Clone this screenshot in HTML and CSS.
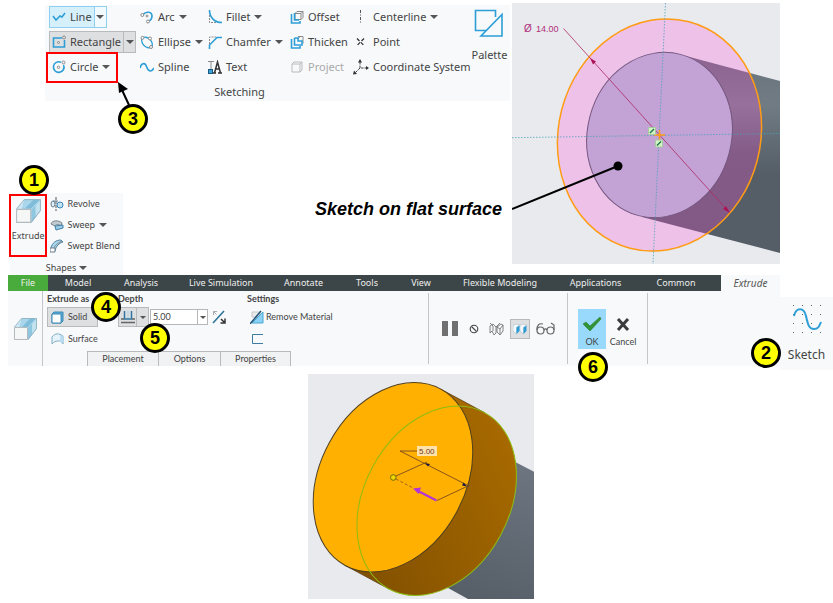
FILE: index.html
```html
<!DOCTYPE html>
<html lang="en">
<head>
<meta charset="utf-8">
<title>Extrude a sketch</title>
<link rel="stylesheet" href="styles.css">
</head>
<body>
<main>
<section class="top">
  <div class="left">
    <div class="sketching">
      <div class="tools">
        <div class="tool-col">
          <div class="tool split line">
            <button class="cmd"><svg class="ico" viewBox="0 0 14 14"><path d="M1 6l3 4 4-4 2 1 3-4" class="blue s2"/></svg>Line</button>
            <button class="drop" aria-label="Line options"><i class="caret"></i></button>
          </div>
          <div class="tool split rectangle">
            <button class="cmd"><svg class="ico" viewBox="0 0 14 14"><path d="M10 3H1.500v9h11V5" class="blue s2"/><circle cx="6.500" cy="7.500" r="1" class="gray"/><circle cx="12" cy="2.500" r="1.500" class="gray"/></svg>Rectangle</button>
            <button class="drop" aria-label="Rectangle options"><i class="caret"></i></button>
          </div>
          <div class="tool circle">
            <button class="cmd"><svg class="ico" viewBox="0 0 14 14"><path d="M9 2.300A5.300 5.300 0 1 0 11.600 5" class="blue s2"/><circle cx="6.500" cy="7.300" r="1.200" class="gray"/><circle cx="11.500" cy="2.500" r="1.500" class="gray"/></svg>Circle</button>
            <button class="drop" aria-label="Circle options"><i class="caret"></i></button>
            <span class="mark"></span>
            <svg class="pointer" viewBox="0 0 14 24"><path d="M12 23L5 8" stroke="#000" stroke-width="2"/><path d="M1 0l10 7-9 4z" fill="#000"/></svg>
            <span class="badge b3">3</span>
          </div>
        </div>
        <div class="tool-col">
          <div class="tool"><button class="cmd"><svg class="ico" viewBox="0 0 14 14"><path d="M3 4.500C6 1 12 1.500 12 6c0 2-1 4-3 5" class="blue s2"/><circle cx="2.300" cy="5" r="1.500" class="gray w"/><circle cx="8" cy="11.500" r="1.500" class="gray w"/><circle cx="7" cy="6" r="1" class="gray"/></svg>Arc</button><button class="drop" aria-label="Arc options"><i class="caret"></i></button></div>
          <div class="tool"><button class="cmd"><svg class="ico" viewBox="0 0 14 14"><ellipse cx="7" cy="7.500" rx="6.300" ry="4.200" transform="rotate(45 7 7.500)" class="blue s1"/><circle cx="2.500" cy="2.800" r="1.500" class="gray w"/><circle cx="11" cy="12" r="1.500" class="gray w"/><circle cx="10" cy="3.500" r="1.500" class="gray w"/></svg>Ellipse</button><button class="drop" aria-label="Ellipse options"><i class="caret"></i></button></div>
          <div class="tool"><button class="cmd"><svg class="ico" viewBox="0 0 14 14"><path d="M0 8C1 3 5 2 6.500 6.500S11 13 14 8" class="blue s2"/></svg>Spline</button></div>
        </div>
        <div class="tool-col">
          <div class="tool"><button class="cmd"><svg class="ico" viewBox="0 0 14 14"><path d="M1.500 0C1.500 7 6 12.500 14 12.500" class="blue s2"/><path d="M1.500 5v7.500H8" class="gray dash"/></svg>Fillet</button><button class="drop" aria-label="Fillet options"><i class="caret"></i></button></div>
          <div class="tool"><button class="cmd"><svg class="ico" viewBox="0 0 14 14"><path d="M1.500 14V10L9 2.500H14" class="blue s2"/><path d="M1.500 9V2H8" class="gray dash"/></svg>Chamfer</button><button class="drop" aria-label="Chamfer options"><i class="caret"></i></button></div>
          <div class="tool"><button class="cmd"><svg class="ico" viewBox="0 0 14 14"><path d="M5 13h3M10 13h4M6.500 13L9.500 2l3 11M7.500 9h4" fill="none" stroke="#333" stroke-width="1.500"/><path d="M0 1.500h6M3 1.500v8" class="gray"/><rect x="0.500" y="9.500" width="4" height="4" fill="#3fa0d5" stroke="#155c85"/></svg>Text</button></div>
        </div>
        <div class="tool-col">
          <div class="tool"><button class="cmd"><svg class="ico" viewBox="0 0 14 14"><path d="M5 3.500L7 1.500h6v6l-2 2H5zM5 3.500h6v6M11 3.500l2-2" class="gray"/><path d="M1.500 4v9H10V11M4.500 3v7H9" class="blue s2"/></svg>Offset</button></div>
          <div class="tool"><button class="cmd"><svg class="ico" viewBox="0 0 14 14"><path d="M8 1.500h5v7M8 4l2-2.500" class="gray"/><path d="M1.500 4v9H10V11M4.500 3v7H12V6H8V3H4.500" class="blue s2"/></svg>Thicken</button></div>
          <div class="tool off"><button class="cmd" disabled><svg class="ico" viewBox="0 0 14 14"><path d="M2 4l2-2h8v8l-2 2H2zM2 4h8v8M10 4l2-2" fill="none" stroke="#bbb"/></svg>Project</button></div>
        </div>
        <div class="tool-col">
          <div class="tool"><button class="cmd"><svg class="ico" viewBox="0 0 14 14"><path d="M5.500 0v14" stroke="#555" stroke-dasharray="3 1.500 1 1.500"/></svg>Centerline</button><button class="drop" aria-label="Centerline options"><i class="caret"></i></button></div>
          <div class="tool"><button class="cmd"><svg class="ico" viewBox="0 0 14 14"><path d="M2 3.500l7 7M9 3.500l-7 7" stroke="#333" stroke-width="1.300" stroke-dasharray="3.500 2"/></svg>Point</button></div>
          <div class="tool"><button class="cmd"><svg class="ico wide" viewBox="0 0 16 16"><path d="M7 3v6h6M7 9l-5 5" fill="none" stroke="#444" stroke-dasharray="2.500 1"/><path d="M7 0l2 3.500H5zM16 9l-3 2V7zM0 15.500l1-4 3 3.500z" fill="#333"/></svg>Coordinate System</button></div>
        </div>
        <button class="palette"><svg viewBox="0 0 30 30"><path d="M12 21.500H1.500v-20h20V8" class="blue s2"/><path d="M28 5.500v21.500H7z" class="blue s2"/></svg>Palette</button>
      </div>
      <div class="group-name">Sketching</div>
    </div>
    <div class="lower">
      <div class="shapes">
        <div class="shapes-body">
          <button class="extrude"><svg viewBox="0 0 24 24"><use href="#box"/></svg>Extrude
            <span class="badge b1">1</span></button>
          <div class="shape-list">
            <div class="tool"><button class="cmd"><svg class="ico" viewBox="0 0 14 14"><path d="M6 0v14" stroke="#555" stroke-dasharray="3 1"/><ellipse cx="3" cy="7" rx="2" ry="3" fill="#dceefa" stroke="#6d7f8c"/><circle cx="10" cy="8" r="3" fill="#bfe2f5" stroke="#3b87b8"/><path d="M3 4h5" stroke="#6d7f8c"/></svg>Revolve</button></div>
            <div class="tool"><button class="cmd"><svg class="ico" viewBox="0 0 14 14"><path d="M1 6c1-4 8-4 11-1l-1 3C8 6 6 6 5 8z" fill="#c3cbd1" stroke="#77848d"/><path d="M5 8l8-1v3l-7 2z" fill="#9ccde8" stroke="#3f7fa8"/></svg>Sweep</button><button class="drop" aria-label="Sweep options"><i class="caret"></i></button></div>
            <div class="tool"><button class="cmd"><svg class="ico" viewBox="0 0 14 14"><path d="M1 9C2 4 6 1 11 1l2 2C9 4 6 7 5 12z" fill="#a8d8f0" stroke="#4d7f9c"/><path d="M0 9h5v4H0z" fill="#fff" stroke="#6d7f8c"/><path d="M4 9c1-3 4-5 8-7" class="gray"/></svg>Swept Blend</button></div>
          </div>
        </div>
        <button class="shapes-name">Shapes<i class="caret"></i></button>
      </div>
      <p class="caption">Sketch on flat surface</p>
    </div>
  </div>
  <svg class="view" viewBox="512 3 268 261" role="img" aria-label="Sketched circle on the end of a shaft">
    <defs>
      <linearGradient id="shaft" x1="0" y1="0" x2="0" y2="1"><stop offset="0" stop-color="#69757d"/><stop offset=".25" stop-color="#707b84"/><stop offset=".6" stop-color="#555e67"/><stop offset="1" stop-color="#555d66"/></linearGradient>
      <linearGradient id="tint" x1="0" y1="0" x2="0" y2="1"><stop offset="0" stop-color="#8d6490"/><stop offset=".25" stop-color="#97709c"/><stop offset=".5" stop-color="#845b87"/><stop offset="1" stop-color="#825985"/></linearGradient>
      <clipPath id="ring"><ellipse cx="659.500" cy="135" rx="101" ry="117" transform="rotate(14.600 659.500 135)"/></clipPath>
    </defs>
    <rect x="512" y="3" width="268" height="261" fill="#e8eaee"/>
    <path d="M686 56L780 81V253L642 217z" fill="url(#shaft)"/>
    <g clip-path="url(#ring)">
      <rect x="540" y="10" width="240" height="250" fill="#eec1e9"/>
      <path d="M686 56L780 81V253L642 217z" fill="url(#tint)"/>
    </g>
    <ellipse cx="659.500" cy="135" rx="72" ry="83.300" transform="rotate(14.600 659.500 135)" fill="#c3a2d6" stroke="#75587f"/>
    <ellipse cx="659.500" cy="135" rx="101" ry="117" transform="rotate(14.600 659.500 135)" fill="none" stroke="#ff9c14" stroke-width="1.500"/>
    <path d="M665.500 3L653 264M512 137.700L780 133.500" stroke="#4fa0b8" stroke-width=".8" stroke-dasharray="1.500 1.500"/>
    <path d="M563.500 28.500L729 212" stroke="#ad2861" stroke-width=".8"/>
    <path d="M590 58l6 3.500-3 3zM730 213l-7-4 3-3z" fill="#ad1457"/>
    <path d="M654 135h11M659.500 130v11" stroke="#ff9c14" stroke-width="1.500"/>
    <path d="M648.500 127.500h7v7h-7zM655.500 140h7v7h-7z" fill="#d2f5c6" stroke="#a9c8a0"/>
    <path d="M650 133l4-4M657 145.500l4-4" stroke="#27764b" stroke-width="1.500"/>
    <text x="524" y="32" font-size="10" class="dim14">Ø</text><text x="536" y="32" font-size="9" class="dim14">14.00</text>
    <path d="M512 209L618 166" stroke="#000" stroke-width="2"/><circle cx="618" cy="166" r="4.500"/>
  </svg>
</section>

<section class="middle">
  <div class="ribbon">
    <nav class="tabs">
      <button class="file">File</button><button>Model</button><button>Analysis</button><button>Live Simulation</button><button>Annotate</button><button>Tools</button><button>View</button><button>Flexible Modeling</button><button>Applications</button><button>Common</button><span></span><button class="current">Extrude</button>
    </nav>
    <div class="panel">
      <div class="feature"><svg viewBox="0 0 24 24"><g id="box"><path d="M1 10L8.500 1H23.500V12L15 23H1z" fill="#cde8f4"/><path d="M9 1.500h14L15 10H6.500z" fill="#7fbddb"/><path d="M9 1.500h8L9 10H6.500z" fill="#a9d6ea"/><path d="M23.500 1.500L15 10.500V23l8.500-11z" fill="#8fc6e0"/><path d="M19 7l4.500-5v10L19 17z" fill="#c2e2f0"/><path d="M1.500 10L8.500 1.500h15v10L15 22.500" fill="none" stroke="#8aa7b5" stroke-width=".7"/><path d="M1.500 10.500h13v12h-13z" fill="#f5f6f6" stroke="#b4bbbf"/></g></svg></div>
      <div class="options">
        <div class="groups">
          <div class="group">
            <h2>Extrude as</h2>
            <button class="opt solid"><svg class="ico" viewBox="0 0 14 14"><path d="M2 4l2-2h9v9l-2 2H2z" fill="#58aedb" stroke="#3c89b5"/><path d="M2 4h9v9H2z" fill="#fff" stroke="#3c89b5"/></svg>Solid</button>
            <button class="opt"><svg class="ico" viewBox="0 0 14 14"><path d="M2 12V5c3-4 7-4 11-1v8c-2-3-3-3-5-3-3 0-4 1-6 3z" fill="#e6f3fa" stroke="#83adc4"/><path d="M9 2.500c2 2 1 5 1 7l3 2V4z" fill="#b5def2"/></svg>Surface</button>
            <span class="badge b4">4</span>
          </div>
          <div class="group">
            <h2>Depth</h2>
            <div class="depth">
              <button class="blind" aria-label="Blind depth"><svg class="ico" viewBox="0 0 14 14"><path d="M3.500 1v8h7V1" fill="none" stroke="#3175a0" stroke-width="1.500"/><path d="M7 1v7" stroke="#a9cfe4"/><path d="M0 9h3M11 9h3M0 12.500h14" stroke="#666" stroke-width="1.500"/></svg></button><button class="drop" aria-label="Depth options"><i class="caret"></i></button>
              <div class="combo"><input type="text" value="5.00" aria-label="Depth value"><button aria-label="Recent values"><i class="caret"></i></button></div>
              <button class="flip" aria-label="Flip direction"><svg class="ico" viewBox="0 0 14 14"><path d="M1 13L12 1" stroke="#2e7299" stroke-width="1.600"/><path d="M1.500 5V1.500H5M1.500 1.500l3 3" fill="none" stroke="#aaa"/><path d="M9 9l3 3M13 8.500V13H8.500" fill="none" stroke="#333" stroke-width="1.500"/></svg></button>
            </div>
            <span class="badge b5">5</span>
          </div>
          <div class="group">
            <h2>Settings</h2>
            <button class="opt remove"><svg class="ico" viewBox="0 0 14 14"><path d="M2 2h8v5H2z" fill="#e9eaeb" stroke="#c8c8c8"/><path d="M2 13L13 2v11z" fill="#8bd3f6" stroke="#4da6d3"/><path d="M0 14L11 1" stroke="#22577a" stroke-width="1.500"/></svg>Remove Material</button>
            <button class="opt remove" aria-label="Thicken sketch"><svg class="ico" viewBox="0 0 14 14"><path d="M13 2.500H2.500v9H13" fill="none" stroke="#3d7ba1"/></svg></button>
          </div>
        </div>
        <div class="subtabs"><button>Placement</button><button>Options</button><button>Properties</button></div>
      </div>
      <div class="preview">
        <button aria-label="Pause"><svg width="18" height="18" viewBox="0 0 18 18"><path d="M1 1h6v15H1zM11 1h6v15h-6z" fill="#707070"/></svg></button>
        <button aria-label="No preview"><svg width="10" height="10" viewBox="0 0 10 10"><circle cx="5" cy="5" r="3.800" fill="none" stroke="#444" stroke-width="1.100"/><path d="M2.500 2.500l5 5" stroke="#444" stroke-width="1.100"/></svg></button>
        <button aria-label="Unattached preview"><svg width="15" height="14" viewBox="0 0 15 14"><path d="M1 4l3-2 3 3v6l-2 2-2-4-2 2zM8 5l4-3 2 1v6l-3 4-3-3zM8 5l3 2v5M7 5l4-4M1 1l3 3v5M11 7l3-4" fill="none" stroke="#666" stroke-width=".8"/></svg></button>
        <button class="on" aria-label="Attached preview"><svg width="14" height="12" viewBox="0 0 14 12"><path d="M0 2.500l3-1.500 3.500 1-3 2.500v6.500L0 8zM7 2.500L10 1l4 1-3.500 2.500V11L7 8z" fill="#f4fafd" stroke="#9cb4c0" stroke-width=".5"/><path d="M3.500 4.500l3-2v5.500l-3 3zM10.500 4.500l3-2v5.500l-3 3z" fill="#2d9bd4"/></svg></button>
        <button aria-label="Verified preview"><svg width="20" height="13" viewBox="0 0 20 13"><circle cx="4.500" cy="8.500" r="3.500" fill="none" stroke="#666" stroke-width="1.200"/><circle cx="14.500" cy="8.500" r="3.500" fill="none" stroke="#666" stroke-width="1.200"/><path d="M8 8c1-1.500 2-1.500 3 0M1 8C1 3 3 1 7 2M18 8V3l-3-2" fill="none" stroke="#666" stroke-width="1.200"/></svg></button>
      </div>
      <div class="confirm">
        <button class="ok"><svg viewBox="0 0 20 16"><path d="M1 8l3-2 4 4 10-9 1 2L8 15z" fill="#2f9433" stroke="#357b33" stroke-width=".6"/></svg>OK<span class="badge b6">6</span></button>
        <button class="cancel"><svg viewBox="0 0 20 16"><path d="M5 3l10 11M15 3L5 14" stroke="#3b3b3b" stroke-width="3"/></svg>Cancel</button>
      </div>
      <div></div>
    </div>
  </div>
  <button class="sketch"><svg viewBox="0 0 30 32"><path d="M1 1.500h29M1 10.500h29M1 19.500h29M1 28.500h29" stroke="#666" stroke-width="1" stroke-dasharray="1 8"/><path d="M2 12C4 3 12 3 14 12s3 13 8 13c4 0 5-2 7-7" class="blue s3"/></svg>Sketch<span class="badge b2">2</span></button>
</section>

<section class="bottom">
  <svg class="result" viewBox="308 374 226 225" role="img" aria-label="Extruded disc preview">
    <defs><linearGradient id="side" x1="490" y1="420" x2="370" y2="590" gradientUnits="userSpaceOnUse"><stop offset="0" stop-color="#a86a00"/><stop offset="1" stop-color="#804f00"/></linearGradient>
    <linearGradient id="bar" x1="525" y1="470" x2="470" y2="599" gradientUnits="userSpaceOnUse"><stop offset="0" stop-color="#6c757f"/><stop offset="1" stop-color="#565e68"/></linearGradient></defs>
    <rect x="308" y="374" width="226" height="225" fill="#e8eaee"/>
    <path d="M500 454L534 471.700V599H468L430 578z" fill="url(#bar)"/>
    <path d="M440.700 389.100L484.400 412.600 389 589 345.300 565.500z" fill="url(#side)"/>
    <ellipse cx="436.700" cy="500.800" rx="72.500" ry="100.300" transform="rotate(28.500 436.700 500.800)" fill="url(#side)"/>
    <path d="M440.700 389.100L484.400 412.600M389 589L345.300 565.500" stroke="#5b4018" stroke-width=".8"/>
    <ellipse cx="393" cy="477.300" rx="72.500" ry="100.300" transform="rotate(28.500 393 477.300)" fill="#ffb000" stroke="#51401f"/>
    <ellipse cx="436.700" cy="500.800" rx="72.500" ry="100.300" transform="rotate(28.500 436.700 500.800)" fill="none" stroke="#8ebd10" stroke-width="1"/>
    <path d="M417 451H400L469 486M396 476l31-14M437 500.500L470 485" fill="none" stroke="#7a4a20" stroke-width=".9"/>
    <path d="M396 479l17 9" stroke="#a0651a" stroke-dasharray="3 2"/>
    <path d="M425 463l5 1-2 2.500zM467 486.500l-5-1 1.500-3z" fill="#1a1a40"/>
    <circle cx="393.300" cy="477.500" r="2.800" fill="#f2d500" stroke="#6c6b10"/>
    <path d="M436.500 500.500L418 491" stroke="#b233d6" stroke-width="2"/><path d="M413 488.500l8-1-2.500 6.500z" fill="#b233d6"/>
    <rect x="417" y="446" width="20" height="10" fill="#ffe2a8"/><text x="419" y="454" font-size="8" class="dim5">5.00</text>
  </svg>
</section>
</main>
</body>
</html>
```
FILE: styles.css
```css
* { box-sizing: border-box; }
body { margin: 0; background: #fff; color: #444; font: 11px/14px "Noto Sans", "Open Sans", sans-serif; }
h2, p { margin: 0; }
button { margin: 0; padding: 0; border: 0; background: none; color: inherit; font: inherit; white-space: nowrap; }
svg { display: block; flex: none; }
.blue { fill: none; stroke: #2e9fd6; }
.s1 { stroke-width: 1.3; }
.s2 { stroke-width: 1.6; }
.s3 { stroke-width: 2; }
.gray { fill: none; stroke: #8a8a8a; }
.gray.w { fill: #fff; }
.dash { stroke-dasharray: 2 1; }
.ico { width: 14px; height: 14px; }
.ico.wide { width: 16px; height: 16px; margin-left: -2px; }
.caret { display: block; width: 0; height: 0; border: 4px solid transparent; border-top-color: #555; border-bottom: 0; }

.badge { position: absolute; z-index: 2; width: 30px; height: 30px; border: 3px solid #000; border-radius: 50%; background: #ff0; color: #000; font: bold 18px/24px "Liberation Sans", Arial, sans-serif; text-align: center; }
.b1 { left: 8px; top: -31px; }
.b2 { left: -29px; top: 41px; }
.b3 { left: 68px; top: 47px; }
.b4 { left: 44px; top: 1px; }
.b5 { left: 22px; top: 32px; }
.b6 { left: 0; top: 43px; }

.top { display: grid; grid-template-columns: 512fr 268fr 53fr; }
.left { min-width: 0; }
.view { width: 100%; margin-top: 3px; }
.dim14, .dim5 { font-family: "Liberation Sans", Arial, sans-serif; }
.dim14 { fill: #b0307a; }
.dim5 { fill: #6b3a2a; }

.sketching { margin: 5px 2px 0 45px; padding: 1px 0 2px 4px; background: #f7f9fb; }
.tools { display: grid; grid-template-columns: 88fr 68fr 82fr 65fr 117fr 41fr; }
.tool-col { display: grid; grid-auto-rows: 22px; row-gap: 3px; min-width: 0; justify-items: start; }
.tool { position: relative; display: flex; align-items: center; height: 22px; border: 1px solid transparent; }
.cmd { display: flex; align-items: center; gap: 4px; height: 100%; padding: 0 2px; }
.drop { display: flex; align-items: center; justify-content: center; width: 12px; height: 100%; }
.line { border-color: #8fd0f0; background: #d5effb; }
.line .drop { border-left: 1px solid #8fd0f0; background: #f3fafd; }
.rectangle { border-color: #b8babc; background: #dedfe1; }
.rectangle .drop { border-left: 1px solid #b8babc; }
.off { color: #aaa; }
.off button { color: inherit; }
.mark { position: absolute; left: -4px; top: -5px; width: 72px; height: 31px; border: 2px solid #f00; }
.pointer { position: absolute; left: 67px; top: 25px; width: 14px; height: 24px; }
.palette { display: flex; flex-direction: column; align-items: center; justify-self: center; gap: 9px; padding-top: 3px; }
.palette svg { width: 30px; height: 30px; }
.group-name { margin: 7px 80px 0 0; text-align: center; }

.lower { display: flex; justify-content: space-between; padding: 92px 10px 0 10px; }
.shapes { width: 113px; height: 82px; background: #f7f9fb; font-size: 9px; }
.shapes-body { display: flex; gap: 2px; }
.extrude { position: relative; display: flex; flex-direction: column; align-items: center; gap: 5px; width: 39px; height: 63px; margin: 1px 0 0 -1px; padding-top: 2px; border: 2px solid #f00; }
.extrude svg { width: 26px; height: 26px; }
.shape-list .tool { height: 21px; }
.shape-list .cmd { padding-left: 0; gap: 3px; }
.shapes-name { display: flex; align-items: center; gap: 3px; margin: 4px auto 0; }
.caption { padding-top: 6px; color: #000; font: italic bold 18px/20px "Liberation Sans", Arial, sans-serif; }

.middle { display: grid; grid-template-columns: 772fr 53fr; padding-left: 8px; font-size: 9px; }
.ribbon { min-width: 0; }
.tabs { display: grid; grid-template-columns: 40fr 60fr 66fr 94fr 71fr 56fr 52fr 106fr 85fr 76fr 7fr 59fr; height: 16px; background: #3c4547; color: #eee; }
.tabs button { min-width: 0; }
.tabs .file { background: #48ab3b; }
.tabs .current { background: #f7f9fb; color: #555; font-size: 10px; font-style: italic; }
.panel { display: grid; grid-template-columns: 34fr 386fr 139fr 80fr 133fr; height: 75px; background: #f7f9fb; font-family: Lato, "Noto Sans", sans-serif; }
.panel > div { min-width: 0; }
.panel > div + div { border-left: 1px solid #c4c6c8; margin: 2px 0; }
.feature { display: grid; place-items: center; }
.feature svg { width: 24px; height: 24px; }
.panel > .options { display: flex; flex-direction: column; justify-content: space-between; margin: 0; }
.groups { display: grid; grid-template-columns: 71fr 129fr 181fr; padding-left: 4px; }
.group { position: relative; min-width: 0; }
.group h2 { height: 16px; font-size: 9px; line-height: 16px; }
.opt { display: flex; align-items: center; gap: 4px; height: 20px; padding: 0 3px; }
.opt + .opt { margin-top: 2px; }
.solid { width: 51px; border: 1px solid #b8babc; background: #dedfe1; padding: 0 2px; }
.remove { gap: 2px; }
.depth { display: flex; align-items: center; height: 20px; }
.blind { display: grid; place-items: center; width: 19px; height: 20px; border: 1px solid #b8babc; background: #dedfe1; }
.depth > .drop { border: 1px solid #b8babc; border-left: 0; background: #dedfe1; }
.depth .caret { border-width: 3px 3px 0; }
.combo { display: flex; width: 58px; height: 16px; margin-left: 1px; border: 1px solid #b5b8ba; background: #fff; }
.combo input { flex: 1; min-width: 0; padding: 0 2px; border: 0; background: none; color: inherit; font: inherit; }
.combo button { display: grid; place-items: center; width: 10px; border-left: 1px solid #b5b8ba; }
.flip { margin-left: 4px; }
.subtabs { display: grid; grid-template-columns: 72px 62px 70px; height: 15px; margin-left: 44px; }
.subtabs button { border: 1px solid #b8babc; border-width: 1px 1px 0 0; background: #f1f2f3; }
.subtabs button:first-child { border-left-width: 1px; }
.preview { display: flex; align-items: center; justify-content: center; gap: 10px; }
.preview button { display: grid; place-items: center; }
.preview .on { width: 20px; height: 20px; margin: 0 -4px; border: 1px solid #b8babc; background: #dedfe1; }
.confirm { display: flex; padding: 16px 0 0 10px; gap: 3px; }
.confirm button { position: relative; display: flex; flex-direction: column; align-items: center; justify-content: flex-end; gap: 3px; width: 28px; height: 40px; }
.confirm svg { width: 20px; height: 16px; }
.ok { background: #99d9fc; }
.sketch { position: relative; display: flex; flex-direction: column; align-items: center; gap: 12px; height: 73px; margin-top: 22px; padding-top: 7px; background: #f7f9fb; font-size: 12px; }
.sketch svg { width: 30px; height: 32px; }

.bottom { display: grid; grid-template-columns: 308fr 226fr 299fr; padding-top: 4px; }
.result { grid-column: 2; width: 100%; }
```
